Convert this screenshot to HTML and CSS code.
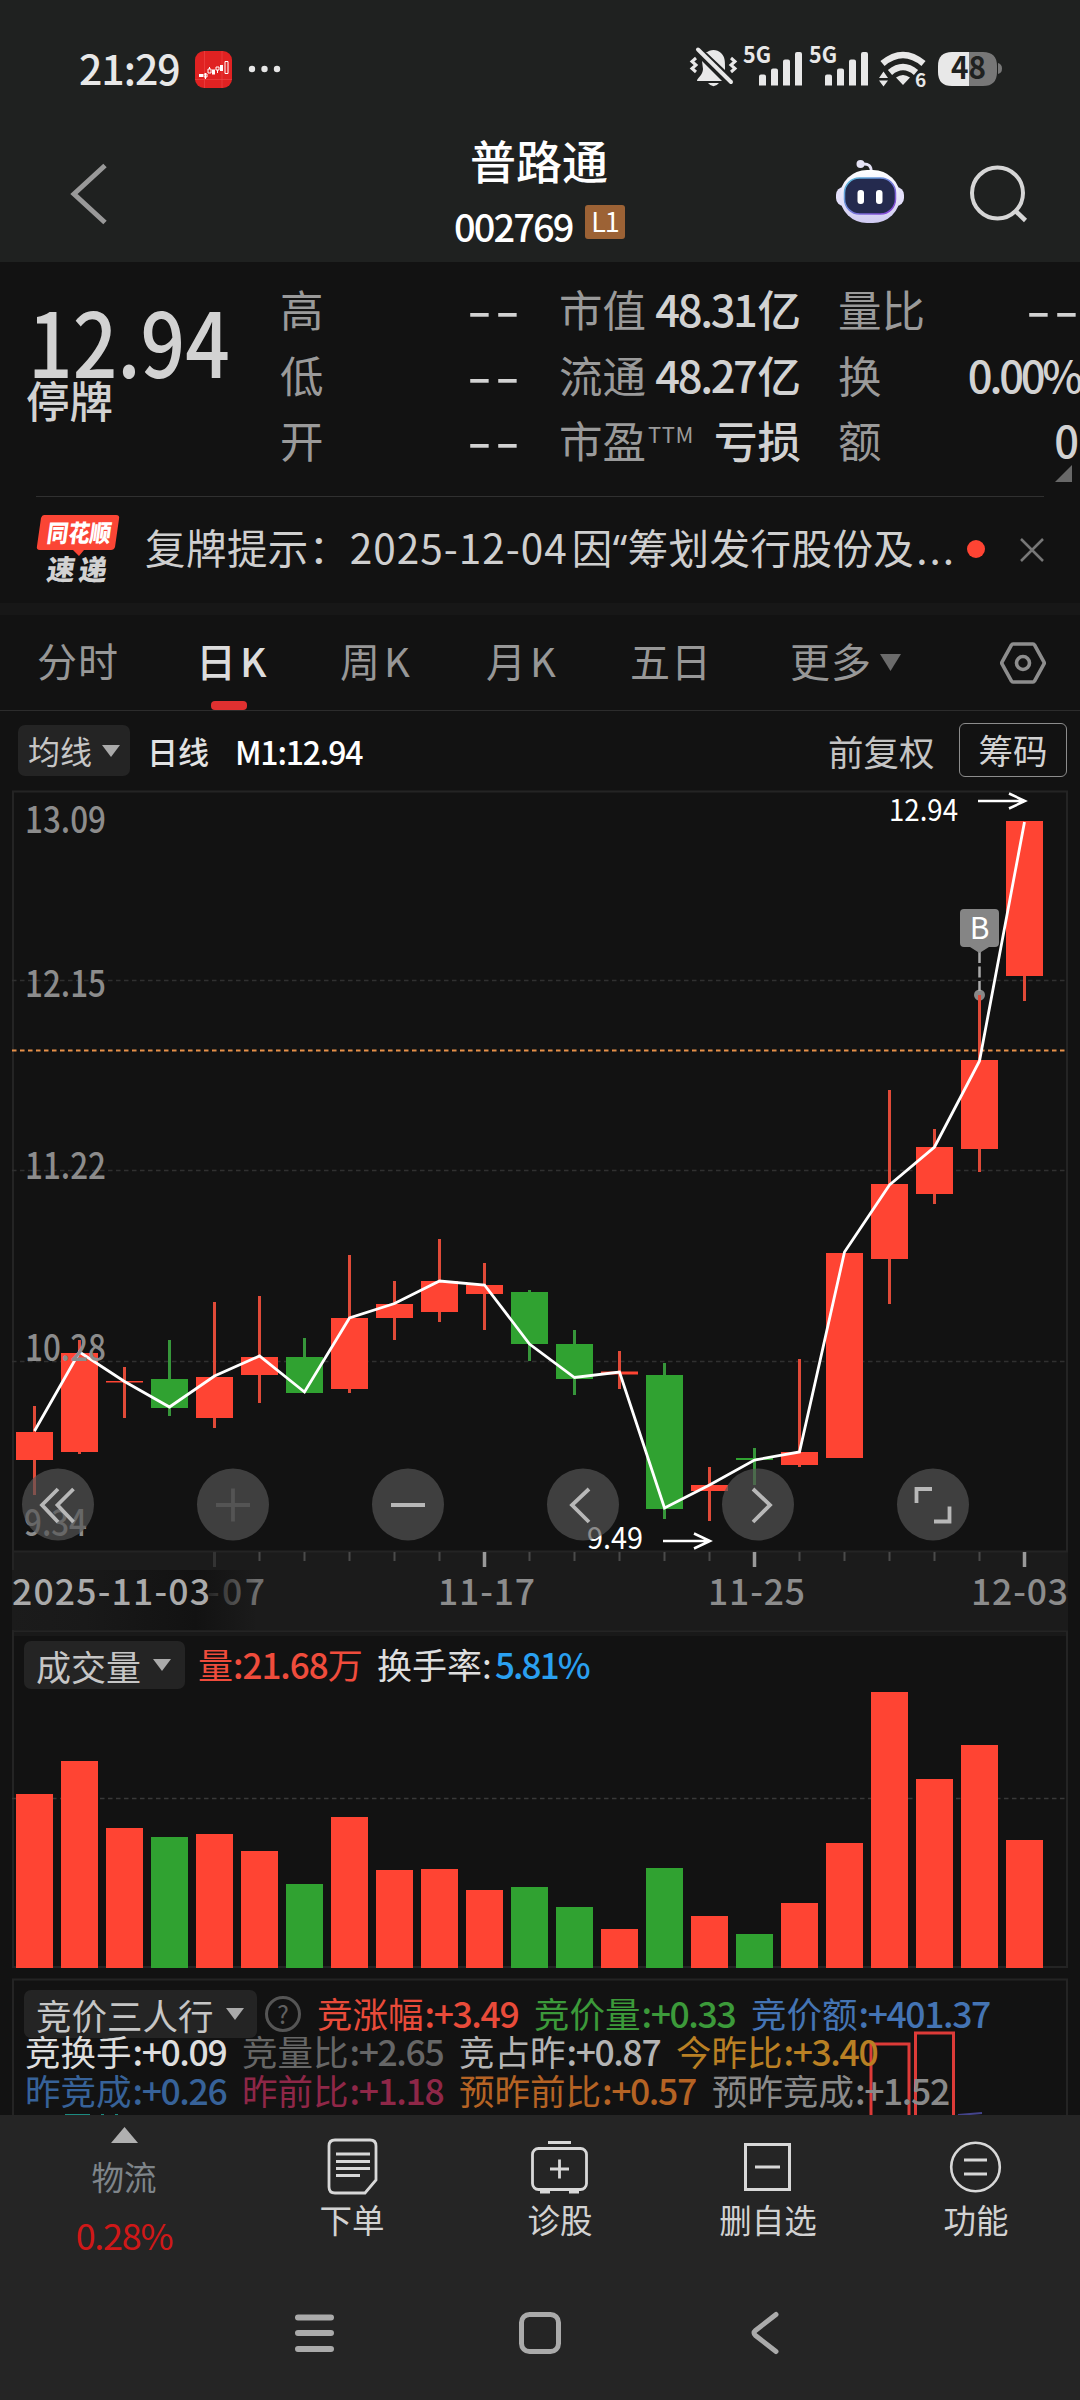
FILE: index.html
```html
<!DOCTYPE html>
<html lang="zh-CN">
<head>
<meta charset="utf-8">
<title>普路通 002769</title>
<link rel="stylesheet" href="styles.css">
</head>
<body>
<div class="phone">
  <header class="top">
    <div class="status">
      <span class="clock">21:29</span>
      <svg class="app-icon" width="37" height="37" viewBox="0 0 37 37"><rect width="37" height="37" rx="9" fill="#e02222"/><path d="M0 28.5h37M9.500 0v37M27 0v37" stroke="#ee4a4a" stroke-width=".6"/><path d="M4 23h4v3h-4zM17 18.500h3v5h-3zM25 14h3v6h-3z" fill="#fff"/><path d="M9 23h3v3h-3zM13 18h3v4h-3zM21 16h3v3h-3zM30 10.500h3v12h-3zM10.500 22v6M14.500 16v2M22.500 19v3" fill="none" stroke="#fff" stroke-width="1"/></svg>
      <svg class="dots" width="34" height="8" viewBox="0 0 34 8"><g fill="#e6e6e6"><circle cx="4" cy="4" r="3.200"/><circle cx="16.500" cy="4" r="3.200"/><circle cx="29" cy="4" r="3.200"/></g></svg>
      <svg class="sys" width="330" height="60" viewBox="0 0 330 60" fill="#e8e8e8">
        <path d="M25 13c4-4 11-4 15 0c4 4 4 8 4 14v3L25 12zM21 21L41 41H16c0-3 6-6 6-12z"/><path d="M17 9.500L50 42" stroke="#e8e8e8" stroke-width="4" stroke-linecap="round"/><path d="M27 43h11q-5.500 6.500-11 0z"/>
        <path d="M15 18l-4 3.500 4 3.500-4 3.500 4 3.500M50 18l4 3.500-4 3.500 4 3.500-4 3.500" fill="none" stroke="#e8e8e8" stroke-width="3"/>
        <text class="net" x="62" y="23" textLength="28" lengthAdjust="spacingAndGlyphs">5G</text><path d="M78 36.500a2 2 0 0 1 2-2h3a2 2 0 0 1 2 2V45.500h-7zM90 30.500a2 2 0 0 1 2-2h3a2 2 0 0 1 2 2V45.500h-7zM102 21.500a2 2 0 0 1 2-2h3a2 2 0 0 1 2 2V45.500h-7zM114 14a2 2 0 0 1 2-2h3a2 2 0 0 1 2 2V45.500h-7z"/>
        <text class="net" x="128" y="23" textLength="28" lengthAdjust="spacingAndGlyphs">5G</text><path d="M144 36.500a2 2 0 0 1 2-2h3a2 2 0 0 1 2 2V45.500h-7zM156 30.500a2 2 0 0 1 2-2h3a2 2 0 0 1 2 2V45.500h-7zM168 21.500a2 2 0 0 1 2-2h3a2 2 0 0 1 2 2V45.500h-7zM180 14a2 2 0 0 1 2-2h3a2 2 0 0 1 2 2V45.500h-7z"/>
        <path d="M201.500 23.500Q222 6.500 242.500 23.500M209 32.500Q222 21.500 235 32.500" fill="none" stroke="#e8e8e8" stroke-width="6.500"/><path d="M222 45l-7-7.500q7-5 14 0zM198 38l4.500-6.500 4.500 6.500zM198 40.500l4.500 6 4.500-6z"/><text class="six" x="234" y="46.500">6</text>
        <path d="M288 12h14q14 0 14 14v6q0 14-14 14h-14zM317 23q4 1 4 5.500t-4 5.500z" fill="#777"/><path d="M271 12h17v34h-17q-14 0-14-14v-6q0-14 14-14z"/><text class="batt" x="270" y="39" textLength="35" lengthAdjust="spacingAndGlyphs">48</text>
      </svg>
    </div>
    <div class="titlebar">
      <svg class="back" width="40" height="64" viewBox="0 0 40 64"><path d="M36 3.500L5 32l31 28.500" fill="none" stroke="#999" stroke-width="5"/></svg>
      <div class="title">
        <h1>普路通</h1>
        <p><span class="code">002769</span><span class="level">L1</span></p>
      </div>
      <svg class="tools" width="230" height="90" viewBox="0 0 230 90">
        <defs><linearGradient id="shell" x1="0" y1="0" x2="0" y2="1"><stop offset="0" stop-color="#fff"/><stop offset="1" stop-color="#cfcaf2"/></linearGradient><linearGradient id="rim" x1="0" y1="0" x2="1" y2="1"><stop offset="0" stop-color="#58bcd8"/><stop offset="1" stop-color="#8a3ed8"/></linearGradient></defs>
        <path d="M42 14q10-1 9 8" fill="none" stroke="#e4e2f4" stroke-width="3"/><circle cx="40.500" cy="14" r="4" fill="#e4e2f4"/>
        <rect x="16" y="37" width="68" height="19" rx="8" fill="#e3dffa"/><rect x="20" y="20" width="60" height="53" rx="27" fill="url(#shell)"/><rect x="24.500" y="28" width="51" height="36" rx="15" fill="#242a4e" stroke="url(#rim)" stroke-width="1.500"/><rect x="37.500" y="40" width="6.500" height="14" rx="3" fill="#fff"/><rect x="56" y="40" width="6.500" height="14" rx="3" fill="#fff"/>
        <circle cx="177.500" cy="43" r="25.500" fill="none" stroke="#d6d6d6" stroke-width="4"/><path d="M195.500 61l10 9.500" stroke="#d6d6d6" stroke-width="4.500"/>
      </svg>
    </div>
  </header>

  <section class="quote">
    <div class="price"><strong>12.94</strong><span>停牌</span></div>
    <dl class="stats c1">
      <div><dt>高</dt><dd><i>--</i></dd></div>
      <div><dt>低</dt><dd><i>--</i></dd></div>
      <div><dt>开</dt><dd><i>--</i></dd></div>
    </dl>
    <dl class="stats c2">
      <div><dt>市值</dt><dd><b>48.31</b>亿</dd></div>
      <div><dt>流通</dt><dd><b>48.27</b>亿</dd></div>
      <div><dt>市盈<sup>TTM</sup></dt><dd>亏损</dd></div>
    </dl>
    <dl class="stats c3">
      <div><dt>量比</dt><dd><i>--</i></dd></div>
      <div><dt>换</dt><dd><b class="pct">0.00%</b></dd></div>
      <div><dt>额</dt><dd>0</dd></div>
    </dl>
    <svg class="corner" width="17" height="17" viewBox="0 0 17 17"><path d="M17 0v17H0z" fill="#686868"/></svg>
  </section>

  <section class="notice">
    <svg width="84" height="70" viewBox="0 0 84 70"><path d="M8 1h72q4 0 3 4l-4 28q-1 3-4 3H48l-5 6-6-6H4q-4 0-3-4L5 4q1-3 3-3z" fill="#fb4535"/><g class="brand"><text x="14" y="28" font-size="24" textLength="64" lengthAdjust="spacingAndGlyphs" fill="#fff" transform="skewX(-8)">同花顺</text><text x="19" y="66" font-size="28" textLength="60" lengthAdjust="spacing" fill="#d2d2d2" transform="skewX(-8)">速递</text></g></svg>
    <p>复牌提示：<span class="date">2025-12-04</span>因<span class="quo">“</span>筹划发行股份及<span class="ell">...</span></p>
    <span class="reddot"></span>
    <svg class="close" width="24" height="24" viewBox="0 0 24 24"><path d="M1 1l22 22M23 1L1 23" stroke="#777" stroke-width="2.500"/></svg>
  </section>

  <nav class="tabs">
    <span>分时</span><span class="on">日<em>K</em></span><span>周<em>K</em></span><span>月<em>K</em></span><span>五日</span><span>更多</span>
    <svg class="tri" width="21" height="17" viewBox="0 0 21 17"><path d="M0 0h21L10.500 17z" fill="#6b6b6b"/></svg>
    <svg class="gear" width="48" height="44" viewBox="0 0 48 44"><path d="M14 3h20q1 0 1.500 1L45 21q.5 1 0 2L35.500 40q-.5 1-1.500 1H14q-1 0-1.500-1L3 23q-.5-1 0-2L12.500 4q.5-1 1.500-1z" fill="none" stroke="#8d8d8d" stroke-width="3.600"/><circle cx="24" cy="22" r="6.500" fill="none" stroke="#8d8d8d" stroke-width="3.600"/></svg>
  </nav>

  <div class="ma">
    <span class="chip">均线<svg width="18" height="12" viewBox="0 0 18 12"><path d="M0 0h18L9 12z" fill="#aaa"/></svg></span>
    <span class="period">日线</span><span class="m1">M1:12.94</span>
    <span class="adj">前复权</span><span class="box">筹码</span>
  </div>

  <svg class="kline" width="1080" height="844" viewBox="0 788 1080 844">
    <defs><linearGradient id="fade"><stop offset="0" stop-color="#1b1b1b"/><stop offset=".3" stop-color="#191919"/><stop offset=".75" stop-color="#121212"/><stop offset="1" stop-color="#121212" stop-opacity="0"/></linearGradient></defs>
    <path d="M12 1552h1056v80H12z" fill="#1b1b1b"/>
    <path d="M13 791.500h1054v760H13zM13 1551v81M12 1631.500h1056" fill="none" stroke="#242424" stroke-width="2"/>
    <path d="M12 980.500h1056M12 1170.500h1056M12 1361.500h1056" stroke="#303030" stroke-width="1.300" stroke-dasharray="4.500 3.500"/>
    <path d="M12 1050.500h1056" stroke="#e8914a" stroke-width="2" stroke-dasharray="4.500 3.500"/>
    <path d="M259.500 1552v9M304.500 1552v9M349.500 1552v9M394.500 1552v9M439.500 1552v9M529.500 1552v9M574.500 1552v9M619.500 1552v9M664.500 1552v9M709.500 1552v9M799.500 1552v9M844.500 1552v9M889.500 1552v9M934.500 1552v9M979.500 1552v9" stroke="#4a4a4a" stroke-width="2"/>
    <path d="M484.500 1552v15M754.500 1552v15M1024.500 1552v15" stroke="#999" stroke-width="3.500"/><path d="M214.500 1552v15" stroke="#333" stroke-width="3"/>
    <circle cx="979.500" cy="995" r="5.500" fill="#888"/>
    <path d="M34.500 1406v89M79.500 1340v114M124.500 1367v51M214.500 1302v126M259.500 1296v107M349.500 1255v138M394.500 1281v59M439.500 1239v83M484.500 1263v67M619.500 1351v38M709.500 1467v54M799.500 1359v108M889.500 1090v214M934.500 1129v75M979.500 995v177M1024.500 900v101" stroke="#e04a38" stroke-width="3"/>
    <path d="M169.500 1340v76M304.500 1338v55M529.500 1290v71M574.500 1330v65M664.500 1363v156M754.500 1448v37" stroke="#36963a" stroke-width="3"/>
    <path d="M16 1432h37v28h-37zM61 1353h37v99h-37zM106 1381h37v1.500h-37zM196 1377h37v41h-37zM241 1357h37v18h-37zM331 1318h37v71h-37zM376 1304h37v14h-37zM421 1281h37v31h-37zM466 1285h37v9h-37zM601 1371.500h37v3h-37zM691 1485h37v6h-37zM781 1452h37v13h-37zM826 1253h37v205h-37zM871 1184h37v75h-37zM916 1147h37v47h-37zM961 1060h37v89h-37zM1006 821h37v155h-37z" fill="#ff4433"/>
    <path d="M151 1379h37v29h-37zM286 1357h37v36h-37zM511 1292h37v52h-37zM556 1344h37v35h-37zM646 1375h37v134h-37zM736 1458h37v2h-37z" fill="#30a231"/>
    <path d="M34.500 1431L79.500 1352L124.500 1381.500L169.500 1407L214.500 1376L259.500 1356L304.500 1392L349.500 1318L394.500 1303.500L439.500 1281L484.500 1285L529.500 1344L574.500 1377.500L619.500 1372L664.500 1508L709.500 1485L754.500 1460L799.500 1452L844.500 1252L889.500 1185L934.500 1147L979.500 1061L1024.500 822" fill="none" stroke="#fff" stroke-width="2.800"/>
    <g class="ylab"><text x="25" y="833" textLength="81" lengthAdjust="spacingAndGlyphs">13.09</text><text x="25" y="997" textLength="81" lengthAdjust="spacingAndGlyphs">12.15</text><text x="25" y="1179" textLength="81" lengthAdjust="spacingAndGlyphs">11.22</text><text x="25" y="1361" textLength="81" lengthAdjust="spacingAndGlyphs">10.28</text><text x="24" y="1536" textLength="63" lengthAdjust="spacingAndGlyphs">9.34</text></g>
    <g class="mark"><text x="889" y="821" textLength="69" lengthAdjust="spacingAndGlyphs">12.94</text><text x="587" y="1549" textLength="56" lengthAdjust="spacingAndGlyphs">9.49</text></g>
    <path d="M978 801h46M1009 793.500l16 7.500-16 7.500M663 1541h46M694 1533.500l16 7.500-16 7.500" fill="none" stroke="#fff" stroke-width="2.500"/>
    <path d="M979.500 952v39" stroke="#aaa" stroke-width="2.500" stroke-dasharray="11 3.500"/><path d="M964 909h31q4 0 4 4v30q0 4-4 4h-6l-9.500 6-9.500-6h-6q-4 0-4-4v-30q0-4 4-4z" fill="#858585"/><text class="flag" x="979.500" y="939" text-anchor="middle">B</text>
    <g fill="#555" fill-opacity=".68"><circle cx="58" cy="1504.500" r="36"/><circle cx="233" cy="1504.500" r="36"/><circle cx="408" cy="1504.500" r="36"/><circle cx="583" cy="1504.500" r="36"/><circle cx="758" cy="1504.500" r="36"/><circle cx="933" cy="1504.500" r="36"/></g>
    <g fill="none" stroke="#b8b8b8" stroke-width="3.800"><path d="M58 1489l-16 16 16 17M73.500 1489l-16 16 16 17"/><path d="M216 1505h34M233 1488.500v33" stroke="#545454"/><path d="M391 1505h34"/><path d="M589 1489l-17 16 17 17M753 1489l17 16-17 17"/><path d="M916.500 1503v-14h15.500M934 1521.500h15.500v-15"/></g>
    <g class="xlab"><text x="207" y="1605" textLength="58" lengthAdjust="spacing" opacity=".75">-07</text><rect x="12" y="1570" width="245" height="60" fill="url(#fade)"/><text x="12" y="1605" textLength="198" class="hot">2025-11-03</text><text x="438" y="1605" textLength="97">11-17</text><text x="708" y="1605" textLength="97">11-25</text><text x="971" y="1605" textLength="97">12-03</text></g>
  </svg>

  <section class="volume">
    <svg class="canvas" width="1080" height="346" viewBox="0 1632 1080 346">
      <path d="M12 1632h1056v4H12z" fill="#191919"/><path d="M13 1632v335h1054v-335" fill="none" stroke="#242424" stroke-width="2"/><path d="M12 1798.500h1056" stroke="#383838" stroke-width="1.300" stroke-dasharray="4.500 3.500"/>
      <path d="M16 1794h37v174h-37zM61 1761h37v207h-37zM106 1828h37v140h-37zM196 1834h37v134h-37zM241 1851h37v117h-37zM331 1817h37v151h-37zM376 1870h37v98h-37zM421 1869h37v99h-37zM466 1890h37v78h-37zM601 1929h37v39h-37zM691 1916h37v52h-37zM781 1903h37v65h-37zM826 1843h37v125h-37zM871 1692h37v276h-37zM916 1779h37v189h-37zM961 1745h37v223h-37zM1006 1840h37v128h-37z" fill="#ff4433"/>
      <path d="M151 1837h37v131h-37zM286 1884h37v84h-37zM511 1887h37v81h-37zM556 1907h37v61h-37zM646 1868h37v100h-37zM736 1934h37v34h-37z" fill="#30a231"/>
    </svg>
    <div class="legend">
      <span class="chip">成交量<svg width="18" height="12" viewBox="0 0 18 12"><path d="M0 0h18L9 12z" fill="#aaa"/></svg></span>
      <span class="vol">量<b>:21.68</b>万</span><span class="turn">换手率<b>:</b></span><span class="rate">5.81%</span>
    </div>
  </section>

  <section class="auction">
    <svg class="canvas" width="1080" height="137" viewBox="0 1978 1080 137"><path d="M13 2115V1979.500h1054V2115" fill="none" stroke="#242424" stroke-width="2"/><path d="M871 2115v-71h38v71M915.500 2115v-82h38v82" fill="none" stroke="#dd3b38" stroke-width="3"/><path d="M65 2114.500h25M101 2114.500h3M115 2114.500h3" stroke="#1c8a80" stroke-width="1"/><path d="M958 2115l24-2" stroke="#44448c" stroke-width="2"/></svg>
    <div class="line head"><span class="chip">竞价三人行<svg width="18" height="12" viewBox="0 0 18 12"><path d="M0 0h18L9 12z" fill="#aaa"/></svg></span><span class="help">?</span>
      <span class="it red">竞涨幅<b>:+3.49</b></span><span class="it green">竞价量<b>:+0.33</b></span><span class="it blue">竞价额<b>:+401.37</b></span></div>
    <div class="line"><span class="it white">竞换手<b>:+0.09</b></span><span class="it dim">竞量比<b>:+2.65</b></span><span class="it light">竞占昨<b>:+0.87</b></span><span class="it gold">今昨比<b>:+3.40</b></span></div>
    <div class="line"><span class="it navy">昨竞成<b>:+0.26</b></span><span class="it wine">昨前比<b>:+1.18</b></span><span class="it wide orange">预昨前比<b>:+0.57</b></span><span class="it wide grey">预昨竞成<b>:+1.52</b></span></div>
  </section>

  <footer class="bottom">
    <div class="actions">
      <div class="sector"><svg width="27" height="16" viewBox="0 0 27 16"><path d="M13.500 0L27 16H0z" fill="#b0b0b0"/></svg><span>物流</span><b>0.28%</b></div>
      <div><svg width="60" height="60" viewBox="0 0 60 60"><path d="M13 4h35q6 0 6 6v34L43 57H13q-6 0-6-6V10q0-6 6-6z" fill="none" stroke="#d8d8d8" stroke-width="2.800"/><path d="M14 18h34M14 25.500h34M14 32.500h34M14 39.500h24" stroke="#d8d8d8" stroke-width="2.800"/></svg><span>下单</span></div>
      <div><svg width="60" height="60" viewBox="0 0 60 60"><rect x="2.500" y="12.500" width="54" height="41" rx="6" fill="none" stroke="#d8d8d8" stroke-width="2.800"/><path d="M18 6.500h23M20 33h19M29.500 23.500v19" stroke="#d8d8d8" stroke-width="2.800"/><path d="M10 54.500h10v3H10zM39 54.500h10v3H39z" fill="#d8d8d8"/></svg><span>诊股</span></div>
      <div><svg width="60" height="60" viewBox="0 0 60 60"><path d="M7.500 8.500h44v45h-44zM17 31h25" fill="none" stroke="#d8d8d8" stroke-width="3"/></svg><span>删自选</span></div>
      <div><svg width="60" height="60" viewBox="0 0 60 60"><circle cx="29.500" cy="31" r="24.300" fill="none" stroke="#d8d8d8" stroke-width="2.600"/><path d="M18 24h23M18 38h23" stroke="#d8d8d8" stroke-width="2.800"/></svg><span>功能</span></div>
    </div>
    <div class="keys">
      <svg width="42" height="44" viewBox="0 0 42 44"><path d="M4 6.500h33M4 22h33M4 38h33" stroke="#aaa" stroke-width="6" stroke-linecap="round"/></svg>
      <svg width="44" height="44" viewBox="0 0 44 44"><rect x="3.500" y="3.500" width="37" height="37" rx="8" fill="none" stroke="#aaa" stroke-width="5"/></svg>
      <svg width="30" height="44" viewBox="0 0 30 44"><path d="M26 3.500L5.500 19.500q-3 2.500 0 5L26 40.500" fill="none" stroke="#aaa" stroke-width="5" stroke-linecap="round"/></svg>
    </div>
  </footer>
</div>
</body>
</html>
```
FILE: styles.css
```css
* { box-sizing: border-box; margin: 0; padding: 0; }
body { background: #121212; font-family: "Noto Sans CJK SC", "Noto Sans", sans-serif; color: #d2d2d2; }
svg { display: block; flex: none; }
b, i, em, strong { font-weight: inherit; font-style: normal; }
span, p, dt, dd, h1 { white-space: nowrap; }
.phone { width: 1080px; height: 2400px; overflow: hidden; display: flex; flex-direction: column; background: #121212; }

.top { height: 262px; background: #1f2120; flex: none; }
.status { height: 110px; display: flex; align-items: flex-start; padding-left: 79px; }
.clock { font-size: 41px; line-height: 60px; font-weight: 500; margin-top: 37px; width: 99px; color: #e8e8e8; letter-spacing: -1px; }
.app-icon { margin: 51px 0 0 17px; }
.dots { margin: 65px 0 0 16px; }
.sys { margin: 40px 0 0 399px; overflow: visible; }
.net { font-size: 23px; font-weight: 700; }
.six { font-size: 19px; font-weight: 700; }
.batt { font-size: 31px; font-weight: 700; fill: #1f2120; }
.titlebar { height: 152px; display: flex; align-items: flex-start; }
.back { margin: 52px 0 0 69px; }
.title { width: 200px; margin-left: 331px; }
.title h1 { font-size: 46px; line-height: 60px; font-weight: 500; color: #fff; text-align: center; margin: 19px 0 0 -2px; }
.title p { display: flex; align-items: center; padding-left: 14px; margin-top: 7px; height: 60px; }
.code { font-size: 38px; line-height: 50px; font-weight: 500; color: #fff; letter-spacing: -1.900px; width: 131px; }
.level { width: 40px; height: 34px; border-radius: 3px; background: #9c6235; color: #fff; font-size: 27px; line-height: 32px; text-align: center; letter-spacing: -1px; margin-top: -8px; }
.tools { margin: 40px 0 0 180px; }

.quote { height: 234px; flex: none; position: relative; display: flex; padding-left: 26px; }
.price { width: 254px; display: flex; flex-direction: column; }
.price strong { font-size: 89px; line-height: 100px; font-weight: 500; margin: 28px 0 0 2px; transform: scaleX(.88); transform-origin: left; }
.price span { font-size: 43.500px; line-height: 50px; font-weight: 500; margin-top: -15px; }
.stats { padding-top: 14px; }
.stats div { height: 65.500px; line-height: 65.500px; display: flex; justify-content: space-between; font-size: 43.500px; }
.stats dt { color: #9a9a9a; font-weight: 400; }
.stats dd { font-weight: 500; }
.stats b { letter-spacing: -2.400px; margin-right: 2px; }
.stats i { display: inline-block; transform: scaleX(1.6); transform-origin: right; letter-spacing: 2px; margin-right: -3px; }
.stats sup { font-size: 22px; line-height: 1; vertical-align: 15px; letter-spacing: .6px; margin-left: 2px; }
.c1 { width: 240px; }
.c2 { width: 242px; margin-left: 39px; }
.c3 { width: 241px; margin-left: 37px; }
.stats .pct { letter-spacing: -3.200px; margin-right: -1px; }
.corner { position: absolute; left: 1055px; top: 203px; }

.notice { height: 107px; flex: none; margin: 0 36px; border-top: 1px solid #303030; display: flex; align-items: flex-start; }
.notice > svg { margin-top: 17px; }
.brand { font-weight: 900; }
.notice p { font-size: 40.500px; line-height: 60px; margin: 20px 0 0 25px; width: 810px; letter-spacing: .45px; color: #cfcfcf; font-weight: 400; }
.date { letter-spacing: 1px; margin-right: 4px; }
.quo { font-family: "Noto Sans"; }
.ell { letter-spacing: 2px; margin-left: 2px; }
.reddot { width: 18px; height: 18px; border-radius: 9px; background: #ff4433; margin: 43px 0 0 12px; }
.notice .close { margin: 41px 0 0 35px; }

.tabs { height: 108px; flex: none; border-top: 12px solid #171717; border-bottom: 1px solid #2c2c2c; display: flex; font-size: 40px; line-height: 90px; color: #979797; font-weight: 400; padding-left: 37px; }
.tabs span { letter-spacing: 1px; }
.tabs em { margin-left: 3px; }
.tabs span:nth-child(1) { width: 159px; }
.tabs span:nth-child(2) { width: 144px; }
.tabs span:nth-child(3) { width: 146px; }
.tabs span:nth-child(4) { width: 144px; }
.tabs span:nth-child(5) { width: 160px; }
.tabs span:nth-child(6) { width: 90px; }
.tabs .on { color: #dcdcdc; font-weight: 500; position: relative; }
.tabs .on::after { content: ""; position: absolute; left: 15px; top: 86px; width: 36px; height: 9px; border-radius: 4px; background: #e03030; }
.tabs .tri { margin-top: 39px; }
.tabs .gear { margin: 26px 0 0 98px; }

.ma { height: 77px; flex: none; display: flex; align-items: flex-start; padding: 14px 0 0 18px; }
.chip { background: #242424; border-radius: 7px; display: flex; align-items: center; color: #c6c6c6; }
.ma .chip { width: 112px; height: 51px; padding-left: 10px; font-size: 32px; line-height: 47px; gap: 10px; }
.period { font-size: 31px; line-height: 46px; margin: 3px 0 0 17px; width: 88px; font-weight: 500; color: #e2e2e2; }
.m1 { font-size: 32px; line-height: 46px; margin-top: 3px; font-weight: 500; color: #fff; width: 593px; letter-spacing: -1.200px; }
.adj { font-size: 35.500px; line-height: 46px; margin-top: 3px; width: 131px; color: #c4c4c4; }
.box { width: 108px; height: 54px; border: 1px solid #8c8c8c; border-radius: 6px; margin-top: -2px; text-align: center; font-size: 34.500px; line-height: 51px; }

.kline { height: 844px; }
.ylab { font-size: 36px; fill: #8c8c8c; font-weight: 500; }
.xlab { font-size: 35.500px; fill: #8c8c8c; font-weight: 500; }
.xlab .hot { fill: #aaa; }
.mark { font-size: 30px; fill: #fff; }
.flag { font-size: 30px; fill: #fff; }

.volume, .auction { position: relative; flex: none; }
.volume { height: 346px; }
.canvas { position: absolute; left: 0; top: 0; }
.legend { position: relative; display: flex; padding: 9px 0 0 24px; font-size: 35px; line-height: 45px; font-weight: 400; }
.legend .chip { width: 161px; height: 48px; padding-left: 12px; gap: 12px; }
.legend b { letter-spacing: -1px; }
.vol { color: #f04c3c; margin-left: 13px; width: 179px; }
.turn { color: #dedede; width: 118px; font-weight: 400; }
.rate { color: #2aa0f0; letter-spacing: -1.900px; font-weight: 500; }
.vol b { font-weight: 500; }

.auction { height: 137px; overflow: hidden; }
.line { position: relative; display: flex; height: 39px; font-size: 35.500px; line-height: 39px; padding-left: 25px; font-weight: 400; }
.head { height: 60px; padding: 12px 0 0 24px; margin-bottom: -7px; line-height: 45px; }
.head .chip { width: 233px; height: 48px; padding-left: 12px; gap: 12px; }
.help { width: 36px; height: 36px; border: 3px solid #555; border-radius: 50%; color: #606060; text-align: center; font-size: 25px; line-height: 28px; margin: 6px 16px 0 8px; }
.it { width: 217px; }
.it.wide { width: 253px; }
.it b { letter-spacing: -1.400px; margin-left: 1px; font-weight: 500; }
.red { color: #e94b3a; } .green { color: #3c9a3a; } .blue { color: #4474b4; }
.white { color: #dedede; } .dim { color: #666; } .light { color: #b4b4b4; } .gold { color: #b98024; }
.navy { color: #376299; } .wine { color: #8f2748; } .orange { color: #b56324; } .grey { color: #8a8a8a; }

.bottom { height: 285px; flex: none; background: #252525; }
.actions { display: grid; grid-template-columns: 248px repeat(4, 208px); height: 190px; }
.actions div { display: flex; flex-direction: column; align-items: center; padding-top: 21px; font-size: 32.500px; line-height: 46px; font-weight: 400; }
.actions div span { margin-top: 0; }
.actions .sector { padding-top: 12px; }
.actions .sector span { color: #7f858a; margin-top: 10px; }
.sector b { color: #d01818; font-size: 36px; line-height: 50px; margin-top: 10px; letter-spacing: -1.300px; }
.keys { display: flex; gap: 182px; padding: 6px 0 0 294px; align-items: center; }
.keys svg:last-child { margin-left: 6px; }
```
